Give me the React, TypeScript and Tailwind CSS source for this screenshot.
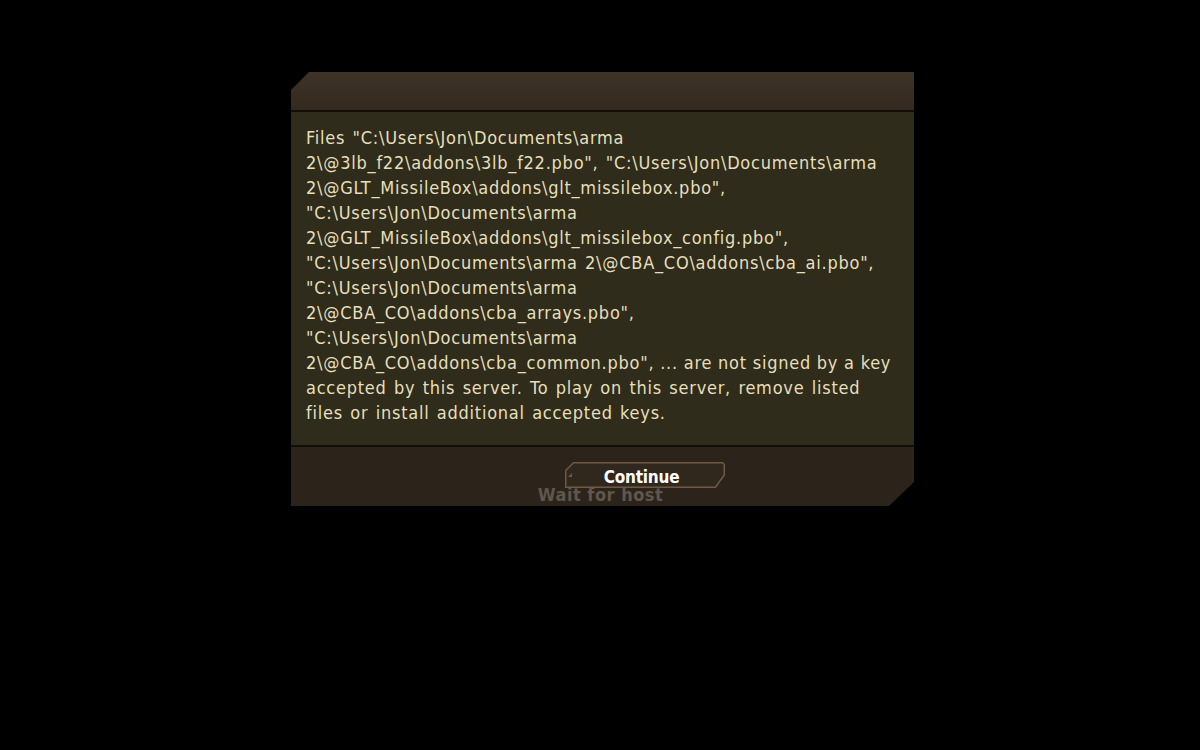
const lines = [
  'Files "C:\\Users\\Jon\\Documents\\arma',
  '2\\@3lb_f22\\addons\\3lb_f22.pbo", "C:\\Users\\Jon\\Documents\\arma',
  '2\\@GLT_MissileBox\\addons\\glt_missilebox.pbo",',
  '"C:\\Users\\Jon\\Documents\\arma',
  '2\\@GLT_MissileBox\\addons\\glt_missilebox_config.pbo",',
  '"C:\\Users\\Jon\\Documents\\arma 2\\@CBA_CO\\addons\\cba_ai.pbo",',
  '"C:\\Users\\Jon\\Documents\\arma',
  '2\\@CBA_CO\\addons\\cba_arrays.pbo",',
  '"C:\\Users\\Jon\\Documents\\arma',
  '2\\@CBA_CO\\addons\\cba_common.pbo", ... are not signed by a key',
  'accepted by this server. To play on this server, remove listed',
  'files or install additional accepted keys.',
]

function ContinueButton() {
  return (
    <div className="relative flex h-[26px] w-[160px] items-center justify-center">
      <svg className="absolute inset-0" width="160" height="26" viewBox="0 0 160 26">
        <path
          d="M8.5 0.75 H157.5 L159.25 2.5 V13 L150.5 25.25 H0.75 V8.5 Z"
          fill="rgba(58,46,34,0.35)"
          stroke="#6e5a42"
          strokeWidth="1.5"
        />
        <path d="M3 15 L7 11 V15 Z" fill="#6e5a42" />
      </svg>
      <span className="relative ml-[-6px] mt-[5px] font-['DejaVu_Sans_Condensed',sans-serif] text-[17px] font-bold tracking-[-0.2px] text-white">
        Continue
      </span>
    </div>
  )
}

export default function App() {
  return (
    <div className="flex h-[750px] w-full justify-center bg-black pl-[5px] pt-[72px]">
      <div className="flex w-[623px] flex-col self-start">
        {/* Title bar */}
        <div className="h-[38px] bg-gradient-to-b from-[#3e3327] to-[#33291f] [clip-path:polygon(18px_0,100%_0,100%_100%,0_100%,0_18px)]" />
        <div className="h-[2px] bg-[#120f09]" />

        {/* Message */}
        <div className="h-[333px] bg-[#2f2c1b] px-[15px] pt-[13px]">
          <div className="font-['DejaVu_Sans_Condensed',sans-serif] text-[18px] leading-[25px] tracking-[0.75px] text-[#e6dfbc] [word-spacing:1.5px]">
            {lines.map((line, i) => (
              <div key={i} className={i === 9 ? 'whitespace-pre [word-spacing:0px]' : 'whitespace-pre'}>
                {line}
              </div>
            ))}
          </div>
        </div>
        <div className="h-[2px] bg-[#120f09]" />

        {/* Buttons */}
        <div className="flex h-[59px] flex-col items-center bg-[#2c241b] pl-[84px] pt-[15px] [clip-path:polygon(0_0,100%_0,100%_35px,calc(100%-25px)_100%,0_100%)]">
          <ContinueButton />
          <div className="-mt-[3px] ml-[-88px] font-['DejaVu_Sans_Condensed',sans-serif] text-[18px] font-bold leading-[20px] tracking-[0.5px] text-[#5f574d]">
            Wait for host
          </div>
        </div>
      </div>
    </div>
  )
}
